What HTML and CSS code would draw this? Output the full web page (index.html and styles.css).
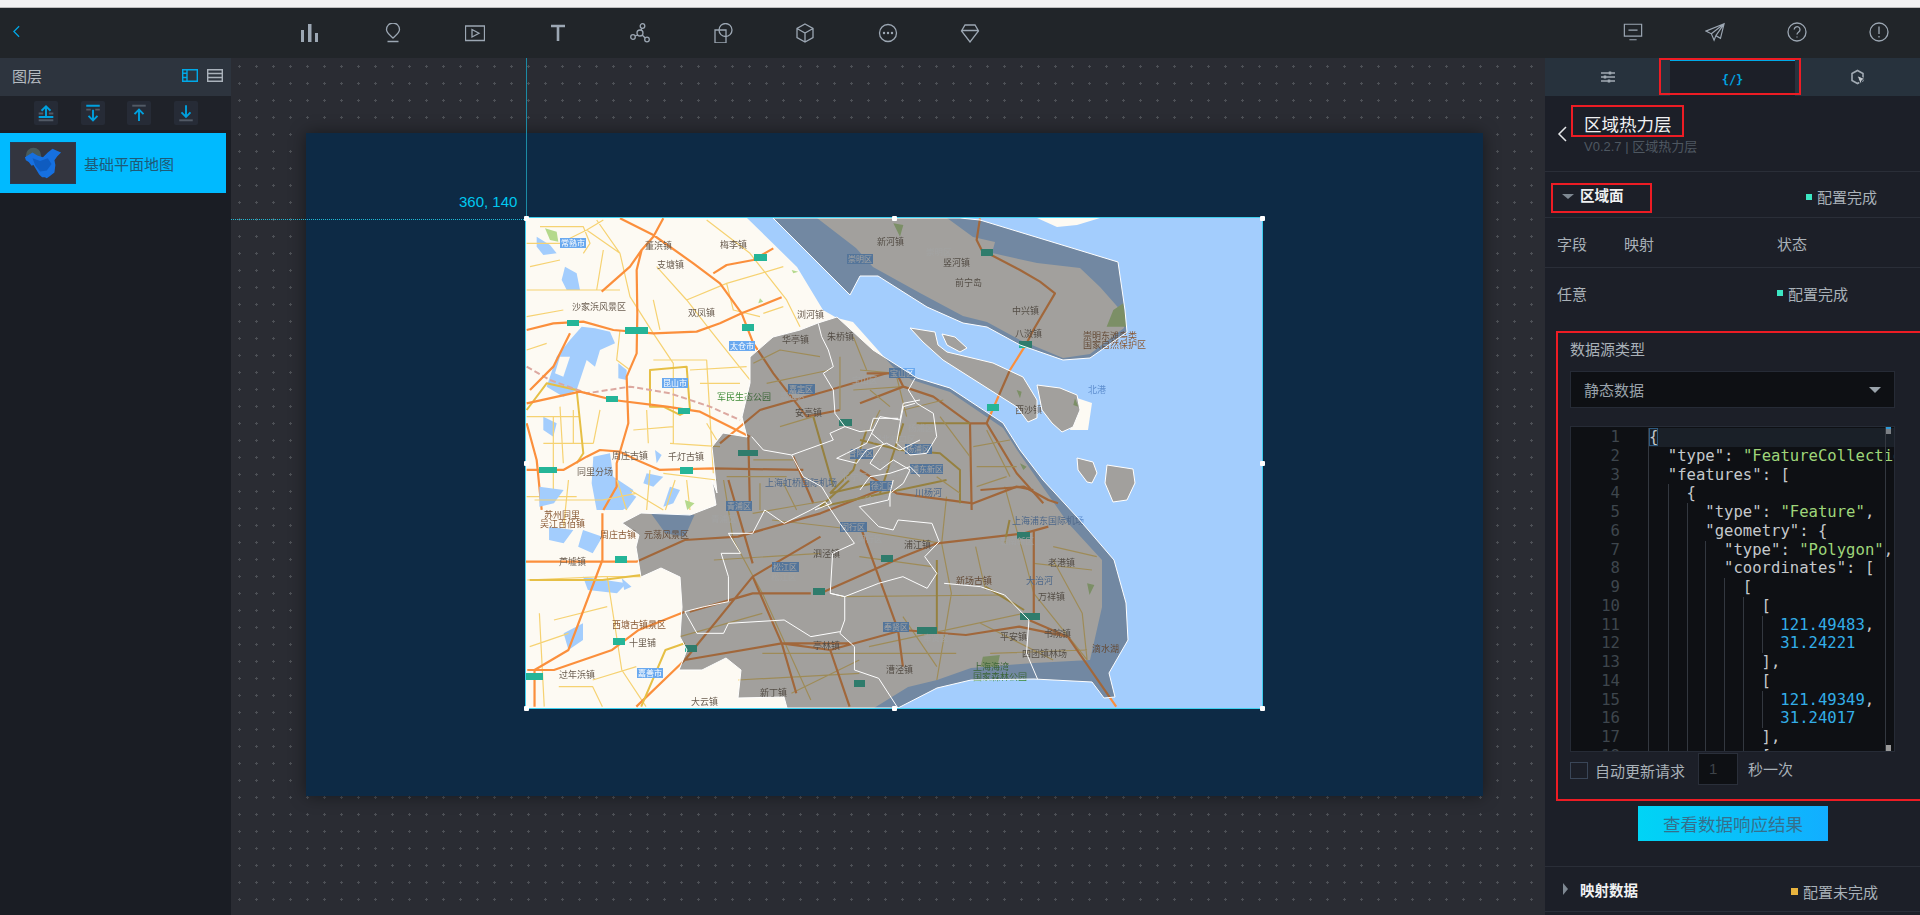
FILE: index.html
```html
<!DOCTYPE html>
<html lang="en">

<head>
  <meta charset="UTF-8" />
  <title>区域热力层</title>
  <link rel="stylesheet" href="styles.css">
</head>

<body>
  <div class="browser-strip"></div>

  <header class="toolbar">
    <svg class="back" viewBox="0 0 8 14"><path d="M7 1 1 7l6 6" /></svg>
    <div class="tools">
      <svg viewBox="0 0 20 20"><path class="solid" d="M1 7h3v12H1zM8 1h3.500v18H8zM15 10h3v9h-3z" /></svg>
      <svg viewBox="0 0 20 20"><path d="M10 15C7 12 3.500 10 3.500 6.500a6.500 6.500 0 0 1 13 0C16.500 10 13 12 10 15ZM4.500 18.500h11" /></svg>
      <svg viewBox="0 0 20 20"><path d="M.5 3h19v14.500H.5zM7 6.500l7 3.800-7 3.700z" /></svg>
      <svg viewBox="0 0 20 20"><path class="thick" d="M3 3h14M10 3v15" /></svg>
      <svg viewBox="0 0 20 20"><circle cx="12.500" cy="3" r="2.300" /><circle cx="3" cy="14" r="2.300" /><circle cx="17" cy="16.500" r="2.300" /><circle cx="10" cy="10" r="3" /><path d="M12 5.200 11 7.300M8 12l-3 1M12.200 12l3 3" /></svg>
      <svg viewBox="0 0 20 20"><path d="M2 7h11v13H2z" /><circle cx="12.500" cy="7" r="6.500" /></svg>
      <svg viewBox="0 0 20 20"><path d="M10 1l8 4.500v9L10 19l-8-4.500v-9zM2 5.500l8 4.500 8-4.500M10 10v9" /></svg>
      <svg viewBox="0 0 20 20"><circle cx="10" cy="10" r="8.500" /><path class="dots" d="M6 10h.01M10 10h.01M14 10h.01" /></svg>
      <svg viewBox="0 0 20 20"><path d="M5 2h10l3.500 6L10 19 1.500 8zM2 7.500h16" /></svg>
    </div>
    <div class="actions">
      <svg viewBox="0 0 22 20"><path d="M1.500 1.500h19v13h-19zM6 8h10M7 18.500h8" /></svg>
      <svg viewBox="0 0 22 20"><path d="M21 1 1 9l6 3 3 7 2-5 5 3zM21 1 7 12M21 1l-9 13" /></svg>
      <svg viewBox="0 0 20 20"><circle cx="10" cy="10" r="9" /><path d="M7.200 7.500a2.900 2.900 0 1 1 4.500 2.500c-1.200.8-1.700 1.400-1.700 2.500M10 14.500v1" /></svg>
      <svg viewBox="0 0 20 20"><circle cx="10" cy="10" r="9" /><path d="M10 4.500v7.500M10 14v1.500" /></svg>
    </div>
  </header>

  <div class="workspace">
    <aside class="layers">
      <div class="layers-head">
        <span>图层</span>
        <div class="view-switch">
          <svg class="on" viewBox="0 0 16 13"><path d="M.7.700h14.600v11.600H.7zM5 .700v11.600M1 4.300h4M1 8.500h4" /></svg>
          <svg viewBox="0 0 16 13"><path d="M.7.700h14.600v11.600H.7zM1 4.500h14M1 8.500h14" /></svg>
        </div>
      </div>
      <div class="layer-actions">
        <button><svg viewBox="0 0 16 16"><path d="M8 11V2M4 6l4-4 4 4M1.500 11.500h13" /><path class="dim" d="M1.500 8.500h4M10.500 8.500h4M1.500 14.500h13" /></svg></button>
        <button><svg viewBox="0 0 16 16"><path d="M2 1.500h12M8 5v9.500M4 10.500l4 4 4-4" /><path class="dim" d="M2 5h4M10 5h4" /></svg></button>
        <button><svg viewBox="0 0 16 16"><path class="dim" d="M2 1.500h12" /><path d="M8 15V5M4 9l4-4 4 4" /></svg></button>
        <button><svg viewBox="0 0 16 16"><path d="M8 1v10M4 7.500l4 4 4-4" /><path class="dim" d="M2 14.500h12" /></svg></button>
      </div>
      <div class="layer-item">
        <div class="thumb">
          <svg viewBox="0 0 66 42">
            <circle class="thumb-halo" cx="23" cy="13" r="8" />
            <path class="thumb-cn" d="M14 15l8-5 5 3 6 2 5-5 5-4 4 2 5 2-4 4-3 4 1 5-1 8-5 4-3 2-2-1-3 0-3-3-3-5-3-5-2 1-3-4-3-2z" />
            <path class="thumb-cn2" d="M22 16l8 3 8-3 4 6-5 7-7 1-5-6z" />
          </svg>
        </div>
        <span>基础平面地图</span>
      </div>
    </aside>

    <main class="canvas">
      <div class="guide-v"></div>
      <div class="guide-h"></div>
      <div class="coords">360, 140</div>
      <div class="screen">
        <div class="map">
          <svg class="map-svg" viewBox="0 0 736 490">
            <defs>
              <polygon id="sh" points="292,105 311,99 347,132 391,160 424,170 477,205 494,232 517,262 551,299 588,342 600,385 602,422 583,455 589,479 578,480 566,464 508,461 445,462 411,470 372,490 261,490 258,479 212,480 215,452 200,440 176,452 153,452 161,432 154,419 156,389 154,359 135,350 115,359 110,329 113,317 96,305 115,295 164,297 190,287 186,262 191,275 186,229 197,215 221,219 216,199 224,165 224,139 247,119 274,112" />
              <polygon id="cm" points="247,0 324,77 334,58 352,58 401,89 437,105 461,109 494,127 537,142 564,140 601,114 599,92 592,44 454,2 434,0" />
              <polygon id="i1" points="384,110 409,114 412,127 421,134 467,145 497,159 511,182 511,200 502,204 491,189 417,142 397,124" />
              <polygon id="i2" points="416,116 429,119 441,130 434,134 421,127" />
              <polygon id="i3" points="511,167 534,170 551,177 554,192 547,209 536,214 526,205 516,192" />
              <polygon id="i4" points="551,240 567,244 571,255 566,265 561,264 552,252" />
              <polygon id="i5" points="581,247 607,251 609,265 601,282 587,284 579,265" />
            </defs>

            <g class="map-art">
              <rect class="water" width="736" height="490" />
              <polygon class="land" points="0,0 221,0 271,49 297,92 311,100 327,104 367,149 386,162 424,174 477,210 491,232 514,265 542,305 576,342 576,389 564,442 508,445 445,450 411,462 382,469 348,490 0,490" />
              <polygon class="land" points="291,0 330,30 347,49 394,75 437,98 461,104 494,122 537,140 564,136 598,110 597,95 574,69 554,50 511,45 466,35 469,24 447,19 421,0" />
              <use class="land" href="#i1" /><use class="land" href="#i2" /><use class="land" href="#i3" />
              <use class="land" href="#i4" /><use class="land" href="#i5" />
              <polygon class="land" points="551,180 566,185 562,212 544,212" />
              <polygon class="land" points="511,0 531,9 551,7 574,0" />

              <!-- west side and north half -->
              <g transform="translate(-6 -8) scale(.3333)">
                <path class="lake" d="M185 350 225 355 270 365 285 400 240 420 225 470 200 450 170 540 130 560 80 530 110 440 150 390Z" />
                <path class="land" d="M120 440 150 440 130 500 105 490Z" />
                <path class="lake" d="M135 170 170 190 180 240 140 240 125 210Z" />
                <path class="lake" d="M50 80 90 105 110 130 70 135 50 110Z" />
                <path class="lake" d="M295 460 320 480 320 510 295 505Z" />
                <path class="lake" d="M70 620 110 640 100 680 70 660Z" />
                <path class="lake" d="M220 740 270 730 280 800 340 840 310 900 230 900 215 820Z" />
                <path class="lake" d="M380 790 430 800 400 830 370 820Z" />
                <path class="lake" d="M450 830 480 840 460 880 430 890Z" />
                <path class="lake" d="M405 720 425 735 410 760Z" />
                <path class="park" d="M75 55 110 65 115 95 90 90Z" />
                <path class="park" d="M720 265 730 275 715 280ZM815 180 835 185 820 190Z" />
                <path class="thin" d="M20 100H120L200 60 250 30M20 240H300M20 320 130 300M200 60 300 130 330 260 400 370 460 460 460 700M410 170 500 270 570 360 650 460 690 510M230 30 300 130M500 270 620 220 790 170M560 30 690 130 800 270 840 350M300 360 290 450 330 480M400 450H560L570 620 580 790M20 620H180M120 590 130 760M240 600 220 700M380 600 385 700M450 700 600 710M20 860H170M430 790 590 810M330 840 430 900M60 50H190L210 100 190 130M30 170 120 150M250 120 230 240M400 270 420 360M620 220 640 300 720 320M730 310 790 290M20 420 80 400M540 520 660 520M510 480 680 470M70 700H220M100 620V860M160 600V700M340 660 460 650M560 640 590 690M390 780 380 900M500 810 510 900" />
                <path class="gold" d="M390 590V480L500 470 510 600 480 615 430 590ZM20 600 80 520 170 540 190 730 170 760" />
                <path class="rail" d="M20 470 90 510 200 550 330 530 450 550 570 590 660 630" />
                <path class="hwy" d="M430 25 400 80 365 120 350 180 352 310 350 430 320 500 325 640 290 760 290 830 250 900M300 25 400 75 520 160 600 220 665 310 700 400 760 490 860 620 960 600M20 360 100 340 190 335 280 360 400 370 530 365 600 340 665 310 785 262M580 190 620 165 700 150 760 115M245 245 330 170 365 120M20 580 180 545 280 570 440 590 540 605 690 680M20 780 130 780 200 740 240 720 300 725 350 750 420 780 580 775 850 780M150 370 100 470 30 540M20 640 50 750 65 900M1100 490 930 540 720 600 600 700M820 740 880 880M685 680 690 900" />
                <path class="gold" d="M880 620 940 830M1040 660 1000 780 930 850M930 850 1060 820" />
                <path class="thin" d="M700 460 780 420 900 440M740 520 930 480M1000 380 1040 480M1020 480 1130 490M960 440 960 600M1130 500 1160 620M780 650 880 620M700 750H820M620 800H800M720 820V900M790 820 830 900M1000 540 1150 530" />
              </g>

              <!-- south half -->
              <g transform="translate(-6 262) scale(.4847 .3333)">
                <path class="lake" d="M270 100 360 105 340 170 300 160Z" />
                <path class="lake" d="M90 460 130 430 130 480 100 510Z" />
                <path class="lake" d="M40 20 90 30 70 70 40 80Z" />
                <path class="lake" d="M130 290 220 310 200 340 140 330Z" />
                <path class="lake" d="M60 140 110 150 90 190 60 180ZM130 150 170 170 150 220 120 200ZM215 30 240 50 220 90 195 70ZM210 295 230 320 215 330Z" />
                <path class="park" d="M340 60 360 70 345 90Z" />
                <path class="thin" d="M30 60H170L240 40M100 0 90 140M200 0 220 90M15 300 170 290 250 290M40 400 50 680M180 290 210 570 260 680M80 620H150L170 680M320 0 300 90M420 0 440 180 500 340 600 660M520 120 700 150 870 190 890 340 860 600M880 50 870 190M1000 20 1040 230 1060 340 1170 540M660 350 1000 345M720 500 1040 400M1100 240 1160 400 1170 540M560 640 700 540M500 520H900M450 600 700 580M330 470 500 400M400 240 620 220M480 100 640 60M700 230 850 260M790 410 860 560M940 200 960 330M1100 200 1190 230M950 430 1100 540M970 520 1170 510M1060 250 1180 270M70 420 180 380M150 600 240 560M20 500 100 460" />
                <path class="hwy" d="M10 245H240L340 180 450 170 620 100 760 20M170 100 170 240 100 510 30 570 30 680M15 570H70L190 510 245 450 340 395M240 680 340 540 540 490 640 510 790 450 920 465 1030 440 1130 470 1230 680M340 540 480 290 620 170M600 340H480L350 395M480 290 540 490 570 640M640 510 680 680M700 130 780 450 790 560M620 340 790 230 860 190 1040 160 1090 140M1060 150V400M950 30 1040 20 1090 60 1110 70M540 490 680 490M430 0 480 250M1050 420 1130 470" />
                <path class="gold" d="M20 300 170 300 250 285M250 680 300 510 340 490M680 0 620 80 880 0M960 320 1040 390M860 240 860 460M1000 190 1010 120" />
                <path class="park" d="M955 530 990 525 985 560 950 560ZM1170 310 1185 315 1175 345Z" />
              </g>

              <!-- bridge road over the estuary and east side -->
              <g transform="translate(334 -8) scale(.3333)">
                <path class="hwy" d="M360 25 350 90 365 120 480 180 540 215 585 250 520 360 500 400 450 480 380 640 330 640 220 560 130 530 0 580M130 530 110 490 20 490M330 640 335 900M380 640 470 790 550 880M0 780 110 850 340 880 470 830 520 840" />
                <path class="gold" d="M170 640H330M0 690 120 720 240 730 300 780 300 880M60 850 130 640" />
                <path class="thin" d="M30 540 90 590M130 600 250 570M240 620 330 740M340 710 450 690M350 770H470M350 830 440 800M380 660 450 800M60 600 30 660M230 800 300 850" />
                <path class="park" d="M100 40 130 45 120 80ZM760 300 790 280 800 350 740 350Z" />
                <path class="park" d="M470 540 485 545 480 565ZM645 565 655 590 640 585ZM480 760 500 770 490 780Z" />
              </g>

              <g class="labels">
                <rect class="tag" x="34" y="20" width="26" height="10" /><text class="tag-t" x="35" y="28">常熟市</text>
                <rect class="tag" x="203" y="123" width="26" height="10" /><text class="tag-t" x="204" y="131">太仓市</text>
                <rect class="tag" x="136" y="160" width="26" height="10" /><text class="tag-t" x="137" y="168">昆山市</text>
                <rect class="tag" x="321" y="36" width="26" height="10" /><text class="tag-t" x="322" y="44">崇明区</text>
                <rect class="tag" x="262" y="166" width="27" height="10" /><text class="tag-t" x="263" y="174">嘉定区</text>
                <rect class="tag" x="363" y="150" width="26" height="10" /><text class="tag-t" x="364" y="158">宝山区</text>
                <rect class="tag" x="200" y="283" width="26" height="10" /><text class="tag-t" x="201" y="291">青浦区</text>
                <rect class="tag" x="246" y="344" width="27" height="10" /><text class="tag-t" x="247" y="352">松江区</text>
                <rect class="tag" x="314" y="304" width="27" height="10" /><text class="tag-t" x="315" y="312">闵行区</text>
                <rect class="tag" x="357" y="404" width="26" height="10" /><text class="tag-t" x="358" y="412">奉贤区</text>
                <rect class="tag" x="384" y="246" width="33" height="10" /><text class="tag-t" x="385" y="254">浦东新区</text>
                <rect class="tag" x="111" y="450" width="26" height="10" /><text class="tag-t" x="112" y="458">嘉善市</text>
                <rect class="tag" x="324" y="231" width="23" height="10" />
                <rect class="tag" x="379" y="226" width="27" height="10" /><text class="tag-t" x="380" y="234">杨浦区</text>
                <rect class="tag" x="344" y="263" width="22" height="10" /><text class="tag-t" x="345" y="271">徐汇区</text>

                <rect class="shield" x="41" y="102" width="12" height="6" /><rect class="shield" x="99" y="109" width="23" height="7" />
                <rect class="shield" x="216" y="106" width="12" height="7" /><rect class="shield" x="228" y="36" width="13" height="7" />
                <rect class="shield" x="80" y="178" width="12" height="6" /><rect class="shield" x="152" y="190" width="12" height="6" />
                <rect class="shield" x="212" y="232" width="20" height="6" /><rect class="shield" x="313" y="201" width="13" height="7" />
                <rect class="shield" x="13" y="249" width="18" height="6" /><rect class="shield" x="154" y="249" width="13" height="7" />
                <rect class="shield" x="455" y="31" width="12" height="7" /><rect class="shield" x="493" y="123" width="13" height="7" />
                <rect class="shield" x="461" y="186" width="12" height="7" /><rect class="shield" x="89" y="338" width="12" height="7" />
                <rect class="shield" x="87" y="420" width="12" height="7" /><rect class="shield" x="159" y="427" width="12" height="7" />
                <rect class="shield" x="0" y="455" width="17" height="7" /><rect class="shield" x="287" y="370" width="12" height="7" />
                <rect class="shield" x="355" y="337" width="12" height="7" /><rect class="shield" x="391" y="409" width="20" height="7" />
                <rect class="shield" x="494" y="395" width="20" height="7" /><rect class="shield" x="491" y="314" width="13" height="7" />
                <rect class="shield" x="328" y="462" width="11" height="7" />

                <text x="46" y="92">沙家浜风景区</text><text x="119" y="31">董浜镇</text><text x="131" y="50">支塘镇</text>
                <text x="194" y="30">梅李镇</text><text x="162" y="98">双凤镇</text><text x="271" y="100">浏河镇</text>
                <text x="256" y="125">华亭镇</text><text x="301" y="122">朱桥镇</text><text x="86" y="241">周庄古镇</text>
                <text x="142" y="242">千灯古镇</text><text x="51" y="257">同里分场</text>
                <text class="green" x="191" y="182">军民生态公园</text><text class="white" x="254" y="181">嘉定区</text><text x="269" y="198">安亭镇</text>
                <text class="white" x="326" y="165">宝山区</text><text x="351" y="27">新河镇</text><text class="white" x="400" y="37">崇明区</text>
                <text x="417" y="48">竖河镇</text><text x="429" y="68">前宁岛</text><text x="486" y="96">中兴镇</text><text x="489" y="119">八滧镇</text>
                <text class="brown" x="557" y="121">崇明东滩鸟类</text><text class="brown" x="557" y="130">国家自然保护区</text>
                <text class="water-t" x="562" y="175">北港</text><text x="489" y="195">西沙镇</text>
                <text class="white" x="382" y="213">杨浦区</text><text class="white" x="347" y="224">闸北虹口区</text>
                <text class="white" x="322" y="238">普陀区</text><text class="white" x="346" y="250">静安区</text><text class="white" x="362" y="258">黄浦区</text>
                <text class="white" x="316" y="262">长宁区</text><text class="white" x="339" y="285">徐汇区</text>
                <text class="water-t" x="389" y="278">川杨河</text><text class="water-t" x="239" y="268">上海虹桥国际机场</text>
                <text class="water-t" x="486" y="306">上海浦东国际机场</text>
                <text class="brown" x="18" y="300">苏州同里</text><text class="brown" x="14" y="309">吴江百佰镇</text><text class="brown" x="74" y="320">周庄古镇</text>
                <text class="brown" x="118" y="320">元荡风景区</text><text class="white" x="185" y="304">青浦区</text>
                <text x="33" y="347">芦墟镇</text><text class="brown" x="86" y="410">西塘古镇景区</text><text x="103" y="428">十里铺</text>
                <text x="33" y="460">过年浜镇</text><text class="white" x="245" y="362">松江区</text><text class="white" x="331" y="324">闵行区</text>
                <text x="378" y="330">浦江镇</text><text x="287" y="339">泗泾镇</text><text class="white" x="474" y="326">惠南新区</text>
                <text class="brown" x="430" y="366">新场古镇</text><text class="water-t" x="500" y="366">大治河</text><text x="512" y="382">万祥镇</text>
                <text x="522" y="348">老港镇</text><text class="brown" x="566" y="434">滴水湖</text><text x="518" y="419">书院镇</text>
                <text x="474" y="422">平安镇</text><text class="white" x="397" y="423">奉贤区</text><text x="287" y="431">亭林镇</text>
                <text x="360" y="455">漕泾镇</text><text x="234" y="478">新丁镇</text><text x="165" y="487">大云镇</text>
                <text class="green" x="447" y="452">上海海湾</text><text class="green" x="447" y="462">国家森林公园</text><text x="496" y="439">四团镇林场</text>
              </g>
            </g>

            <g class="ovl">
              <use href="#sh" /><use href="#cm" /><use href="#i1" /><use href="#i2" /><use href="#i3" /><use href="#i4" /><use href="#i5" />
            </g>

            <g class="district" transform="translate(-6 -8) scale(.3333)">
              <path d="M895 340 905 380 925 420 940 470 910 490 940 540 945 610 975 650 930 670 940 690 815 735 730 720 695 680M815 735 850 800 905 830 935 880 885 900M975 650 1020 665 1060 660 1080 620 1140 630 1150 580 1200 570M1060 660 1040 700 980 730 950 745 1010 760 1040 720 1100 700 1140 720 1200 690M1020 840 1050 800 1110 790 1170 770 1200 800" />
            </g>
            <g class="district" transform="translate(334 -8) scale(.3333)">
              <path d="M165 505 145 540 170 580 220 610 230 680 200 730 150 735 110 700 120 640 130 590 165 580M30 660 40 625 115 625M35 670 70 700 30 760 60 780 100 750 150 780 130 820 90 850 90 890" />
            </g>
            <g class="district" transform="translate(-6 262) scale(.4847 .3333)">
              <path d="M505 90 545 130 600 90 630 65 660 130 690 190 645 220 640 340 670 350 740 310 790 290 840 325 860 280 835 230 865 185 850 130 780 120 770 150 740 140 700 80 760 60 770 0M640 340 670 350 670 420 660 460 690 500 690 570 740 595 780 685M875 310 950 320 1000 345 1050 420 1045 520 1068 598M430 160 455 220 415 220 430 290 430 365 380 380 340 395 365 460 420 460 430 430 545 420 600 470 660 455M430 160 480 160 505 90" />
            </g>
          </svg>
          <i class="handle tl"></i><i class="handle tc"></i><i class="handle tr"></i>
          <i class="handle ml"></i><i class="handle mr"></i>
          <i class="handle bl"></i><i class="handle bc"></i><i class="handle br"></i>
        </div>
      </div>
    </main>

    <aside class="config">
      <div class="tabs">
        <div class="tab">
          <svg viewBox="0 0 16 12"><path d="M1 2h14M1 6h14M1 10h14" /><path class="knob" d="M10 .500v3M5 4.500v3M9 8.500v3" /></svg>
        </div>
        <div class="tab active">{/}</div>
        <div class="tab">
          <svg viewBox="0 0 16 16"><path class="hex" d="M7.500 1.500 13 4.500v7l-5.500 3-5.500-3v-7z" /><path class="arrow" d="M7 6.500l8.500 3.500-3.500 1.300-1.500 4z" /></svg>
        </div>
      </div>

      <div class="comp-head">
        <svg class="comp-back" viewBox="0 0 10 16"><path d="M9 1 2 8l7 7" /></svg>
        <div>
          <div class="comp-title">区域热力层</div>
          <div class="comp-ver">V0.2.7 | 区域热力层</div>
        </div>
      </div>

      <div class="section-row">
        <span class="tri-down"></span>
        <span class="section-name">区域面</span>
        <span class="status status-a"><i class="sq ok"></i>配置完成</span>
      </div>
      <div class="field-row head-row">
        <span class="col-a">字段</span><span class="col-b">映射</span><span class="col-c">状态</span>
      </div>
      <div class="field-row tall-row">
        <span class="col-a">任意</span><span class="col-b"></span>
        <span class="col-c"><i class="sq ok"></i>配置完成</span>
      </div>

      <div class="source">
        <label class="source-label">数据源类型</label>
        <div class="select">静态数据<span class="caret"></span></div>
        <div class="editor">
          <div class="ruler"><i class="mark-blue"></i><i class="mark-top"></i><i class="mark-bottom"></i></div>
          <div class="line current"><span class="num">1</span><code><b class="brace">{</b></code></div>
          <div class="line"><span class="num">2</span><code><i></i>"type": <em>"FeatureCollection"</em>,</code></div>
          <div class="line"><span class="num">3</span><code><i></i>"features": [</code></div>
          <div class="line"><span class="num">4</span><code><i></i><i></i>{</code></div>
          <div class="line"><span class="num">5</span><code><i></i><i></i><i></i>"type": <em>"Feature"</em>,</code></div>
          <div class="line"><span class="num">6</span><code><i></i><i></i><i></i>"geometry": {</code></div>
          <div class="line"><span class="num">7</span><code><i></i><i></i><i></i><i></i>"type": <em>"Polygon"</em>,</code></div>
          <div class="line"><span class="num">8</span><code><i></i><i></i><i></i><i></i>"coordinates": [</code></div>
          <div class="line"><span class="num">9</span><code><i></i><i></i><i></i><i></i><i></i>[</code></div>
          <div class="line"><span class="num">10</span><code><i></i><i></i><i></i><i></i><i></i><i></i>[</code></div>
          <div class="line"><span class="num">11</span><code><i></i><i></i><i></i><i></i><i></i><i></i><i></i><u>121.49483</u>,</code></div>
          <div class="line"><span class="num">12</span><code><i></i><i></i><i></i><i></i><i></i><i></i><i></i><u>31.24221</u></code></div>
          <div class="line"><span class="num">13</span><code><i></i><i></i><i></i><i></i><i></i><i></i>],</code></div>
          <div class="line"><span class="num">14</span><code><i></i><i></i><i></i><i></i><i></i><i></i>[</code></div>
          <div class="line"><span class="num">15</span><code><i></i><i></i><i></i><i></i><i></i><i></i><i></i><u>121.49349</u>,</code></div>
          <div class="line"><span class="num">16</span><code><i></i><i></i><i></i><i></i><i></i><i></i><i></i><u>31.24017</u></code></div>
          <div class="line"><span class="num">17</span><code><i></i><i></i><i></i><i></i><i></i><i></i>],</code></div>
          <div class="line"><span class="num">18</span><code><i></i><i></i><i></i><i></i><i></i><i></i>[</code></div>
        </div>
        <div class="refresh">
          <span class="check"></span>
          <span class="refresh-label">自动更新请求</span>
          <span class="num-input">1</span>
          <span class="refresh-unit">秒一次</span>
        </div>
      </div>

      <div class="btn-row"><button class="result-btn">查看数据响应结果</button></div>

      <div class="section-row map-row">
        <span class="tri-right"></span>
        <span class="section-name">映射数据</span>
        <span class="status status-b"><i class="sq warn"></i>配置未完成</span>
      </div>
    </aside>
  </div>

  <!-- red annotation boxes drawn on the screenshot -->
  <div class="note note-tab"></div>
  <div class="note note-title"></div>
  <div class="note note-section"></div>
  <div class="note note-source"></div>
</body>

</html>
```

FILE: styles.css
```css
* {
  box-sizing: border-box;
}

html,
body {
  height: 100%;
}

body {
  margin: 0;
  position: relative;
  overflow: hidden;
  display: flex;
  flex-direction: column;
  font-family: "Liberation Sans", "Noto Sans CJK SC", sans-serif;
  font-size: 15px;
  color: #a9b1b8;
  background-color: #1a1d24;
}

svg {
  display: block;
}

.browser-strip {
  height: 8px;
  flex: none;
  background-color: #f2f2f2;
  border-bottom: 1px solid #bdbdbd;
}

/* top toolbar */
.toolbar {
  height: 50px;
  flex: none;
  display: flex;
  align-items: center;
  padding-right: 31px;
  background-color: #212529;
}

.toolbar svg path,
.toolbar svg circle {
  fill: none;
  stroke: #9ca7b3;
  stroke-width: 1.3;
}

.toolbar .back {
  width: 7px;
  height: 13px;
  margin: -3px 0 0 13px;
}

.toolbar .back path {
  stroke: #00a9e8;
  stroke-width: 1.4;
}

.toolbar svg path.solid {
  fill: #9ca7b3;
  stroke: none;
}

.toolbar svg path.thick {
  stroke-width: 2.6;
}

.toolbar svg path.dots {
  stroke-width: 2.4;
  stroke-linecap: round;
}

.tools {
  display: flex;
  gap: 62.500px;
  margin: -1px 0 0 280px;
}

.tools svg {
  width: 20px;
  height: 20px;
}

.actions {
  display: flex;
  gap: 62px;
  margin: -3px 0 0 auto;
}

.actions svg {
  width: 20px;
  height: 20px;
}

.workspace {
  flex: 1;
  min-height: 0;
  display: flex;
}

/* layer panel */
.layers {
  width: 231px;
  flex: none;
  background-color: #1a1d24;
}

.layers-head {
  height: 38px;
  display: flex;
  align-items: center;
  justify-content: space-between;
  padding: 0 8px 3px 12px;
  background-color: #2d343e;
  color: #b4bac0;
}

.view-switch {
  display: flex;
  gap: 9px;
}

.view-switch svg {
  width: 16px;
  height: 13px;
}

.view-switch path {
  fill: none;
  stroke: #aab2bb;
  stroke-width: 1.400;
}

.view-switch .on path {
  stroke: #00a9e8;
}

.layer-actions {
  height: 34px;
  display: flex;
  align-items: center;
  gap: 22.500px;
  padding-left: 34px;
  background-color: #1f2229;
}

.layer-actions button {
  width: 24px;
  height: 24px;
  padding: 3px;
  border: none;
  border-radius: 2px;
  background-color: #262b36;
}

.layer-actions path {
  fill: none;
  stroke: #00a0de;
  stroke-width: 1.700;
}

.layer-actions path.dim {
  stroke: #525a66;
}

.layer-item {
  width: 226px;
  height: 60px;
  margin-top: 3px;
  display: flex;
  align-items: center;
  gap: 8px;
  padding-left: 10px;
  background-color: #00baff;
  color: #1e5a78;
}

.thumb {
  width: 66px;
  height: 42px;
  background-color: #33353f;
  border: 1px solid #2c3a52;
}

.thumb svg {
  width: 100%;
  height: 100%;
}

.thumb-halo {
  fill: #55736e;
  opacity: 0.6;
}

.thumb-cn {
  fill: #1670e0;
}

.thumb-cn2 {
  fill: #0f5cc0;
}

/* canvas */
.canvas {
  flex: 1;
  position: relative;
  padding: 75px 62px 0 75px;
  overflow: hidden;
  background-color: #2a2c33;
  background-image: radial-gradient(circle, #4d5056 1px, transparent 1.300px);
  background-size: 17px 17px;
  background-position: 0 0;
}

.screen {
  width: 1177px;
  height: 663px;
  padding: 85px 0 0 220px;
  background-color: #0d2a45;
  box-shadow: 0 0 16px rgba(0, 0, 0, 0.45);
}

.map {
  width: 736px;
  height: 490px;
  position: relative;
  outline: 1px solid #3fd0f0;
}

.map-svg {
  width: 736px;
  height: 490px;
}

.map-art {
  filter: blur(0.45px);
}

.water {
  fill: #a3cdfd;
}

.land {
  fill: #fdfaf3;
}

.lake {
  fill: #a3cdfd;
}

.park {
  fill: #b5d98c;
}

.thin,
.gold,
.hwy,
.rail {
  fill: none;
  stroke-linejoin: round;
  vector-effect: non-scaling-stroke;
}

.thin {
  stroke: #f6d272;
  stroke-width: 1.200;
}

.gold {
  stroke: #e6bf45;
  stroke-width: 2;
}

.hwy {
  stroke: #fb8f3c;
  stroke-width: 2.200;
}

.rail {
  stroke: #dca8a0;
  stroke-width: 2;
  stroke-dasharray: 6 3;
}

.labels text {
  font-size: 9px;
  fill: #6a5d50;
}

.labels .brown {
  fill: #8a5a35;
}

.labels .green {
  fill: #3c8a35;
}

.labels .water-t {
  fill: #5f8fcf;
}

.labels .white {
  fill: #ffffff;
  font-size: 8.500px;
}

.labels .tag-t {
  fill: #ffffff;
  font-size: 8px;
}

.tag {
  fill: #6aa9ef;
}

.shield {
  fill: #25b598;
}

.ovl use {
  fill: rgba(60, 60, 60, 0.47);
  stroke: #ffffff;
  stroke-width: 1;
}

.district path {
  fill: none;
  stroke: #ffffff;
  stroke-width: 1;
  vector-effect: non-scaling-stroke;
}

.guide-v {
  position: absolute;
  left: 295px;
  top: 0;
  width: 1px;
  height: 160px;
  background-color: #1b8aa5;
}

.guide-h {
  position: absolute;
  left: 0;
  top: 161px;
  width: 295px;
  border-top: 1px dotted #20bcd8;
}

.coords {
  position: absolute;
  left: 228px;
  top: 135px;
  color: #00c8f0;
  z-index: 1;
}

.handle {
  position: absolute;
  width: 5px;
  height: 5px;
  margin: -2px 0 0 -2px;
  background-color: #ffffff;
  border-radius: 1px;
}

.tl, .ml, .bl { left: 0; }
.tc, .bc { left: 50%; }
.tr, .mr, .br { left: 100%; }
.tl, .tc, .tr { top: 0; }
.ml, .mr { top: 50%; }
.bl, .bc, .br { top: 100%; }

/* config panel */
.config {
  width: 375px;
  flex: none;
  background-color: #1c1f28;
}

.tabs {
  height: 38px;
  display: grid;
  grid-template-columns: 125px 125px 125px;
  background-color: #27323d;
}

.tab {
  display: flex;
  align-items: center;
  justify-content: center;
}

.tab svg {
  width: 16px;
  height: 16px;
}

.tab path {
  fill: none;
  stroke: #a2abb4;
  stroke-width: 1.300;
}

.tab path.knob {
  stroke-width: 2.500;
}

.tab path.hex {
  stroke-width: 1.600;
}

.tab path.arrow {
  fill: #c2c8ce;
  stroke: #27323d;
  stroke-width: 1;
}

.tab.active {
  margin-top: 2px;
  padding-top: 2px;
  background-color: #1c1f28;
  border-top: 1px solid #00a9e8;
  color: #00a3e0;
  font-family: "DejaVu Sans Mono", monospace;
  font-size: 12px;
  font-weight: bold;
}

.comp-head {
  height: 76px;
  display: flex;
  gap: 17px;
  padding: 18px 0 0 12px;
  border-bottom: 1px solid #2a2e38;
}

.comp-back {
  width: 10px;
  height: 16px;
  margin-top: 12px;
  flex: none;
}

.comp-back path {
  fill: none;
  stroke: #e6e8ea;
  stroke-width: 1.500;
}

.comp-title {
  font-size: 17.500px;
  line-height: 22px;
  color: #f0f1f2;
}

.comp-ver {
  font-size: 13px;
  line-height: 18px;
  margin-top: 2px;
  color: #4e5761;
}

.section-row {
  height: 46px;
  position: relative;
  display: flex;
  align-items: center;
  border-bottom: 1px solid #2a2e38;
}

.section-name {
  color: #f0f1f2;
  font-weight: bold;
  font-size: 14.500px;
}

.tri-down {
  width: 0;
  height: 0;
  margin: 3px 6px 0 17px;
  border-left: 6px solid transparent;
  border-right: 6px solid transparent;
  border-top: 5px solid #7e8892;
}

.tri-right {
  width: 0;
  height: 0;
  margin: 0 12px 0 18px;
  border-top: 6px solid transparent;
  border-bottom: 6px solid transparent;
  border-left: 5px solid #7e8892;
}

.status {
  position: absolute;
  display: flex;
  align-items: center;
  top: 14px;
  white-space: nowrap;
}

.status-a {
  left: 261px;
}

.status-b {
  left: 246px;
}

.sq {
  width: 6px;
  height: 6px;
  margin-right: 5px;
  display: inline-block;
}

.ok {
  background-color: #3ce6c3;
}

.warn {
  width: 7px;
  height: 7px;
  background-color: #e8b33e;
}

.field-row {
  display: flex;
  align-items: center;
  padding-left: 12px;
  border-bottom: 1px solid #2a2e38;
}

.head-row {
  height: 50px;
  padding-top: 2px;
}

.tall-row {
  height: 50px;
  border-bottom: none;
}

.col-a {
  width: 67px;
}

.col-b {
  width: 153px;
}

.col-c {
  display: flex;
  align-items: center;
}

.source {
  height: 468px;
  margin: 14px 0 0 25px;
  padding-top: 1px;
}

.source-label {
  display: block;
  line-height: 20px;
  margin-top: 7px;
}

.select {
  width: 325px;
  height: 37px;
  position: relative;
  margin-top: 11px;
  display: flex;
  align-items: center;
  padding-left: 13px;
  background-color: #0e1014;
  border: 1px solid #262b36;
  color: #9aa3ab;
}

.caret {
  position: absolute;
  right: 13px;
  top: 15px;
  border-left: 6px solid transparent;
  border-right: 6px solid transparent;
  border-top: 6px solid #9aa3ab;
}

.editor {
  width: 325px;
  height: 326px;
  position: relative;
  margin-top: 18px;
  padding-top: 1px;
  overflow: hidden;
  background-color: #0e1014;
  border: 1px solid #262b36;
  font-family: "DejaVu Sans Mono", monospace;
  font-size: 15.600px;
  color: #c5c9cc;
}

.line {
  height: 18.750px;
  line-height: 18.750px;
  display: flex;
  white-space: pre;
}

.num {
  width: 77px;
  flex: none;
  padding-right: 28px;
  text-align: right;
  color: #3e464d;
}

.line code {
  flex: 1;
  font: inherit;
  border-left: 1px solid #333840;
}

.line code i {
  display: inline-block;
  width: 2ch;
  height: 18.750px;
  vertical-align: top;
}

.line code i + i {
  border-left: 1px solid #333840;
}

.line em {
  font-style: normal;
  color: #9fd67a;
}

.line u {
  text-decoration: none;
  color: #33aee8;
}

.current code {
  background-color: #1a2028;
}

.brace {
  font-weight: normal;
  outline: 1px solid #2e5a80;
  outline-offset: -1px;
}

.ruler {
  position: absolute;
  right: 0;
  top: 0;
  bottom: 0;
  width: 9px;
  z-index: 1;
  border-left: 1px solid #333840;
}

.ruler i {
  position: absolute;
  left: 0;
  width: 5px;
}

.mark-blue {
  top: 0;
  height: 2px;
  background-color: #2d9ad8;
}

.mark-top {
  top: 2px;
  height: 5px;
  background-color: #7c8085;
}

.mark-bottom {
  bottom: 0;
  height: 6px;
  background-color: #9a9a9a;
}

.refresh {
  display: flex;
  align-items: center;
  height: 32px;
  margin-top: 1px;
}

.check {
  width: 18px;
  height: 17px;
  margin-top: 2px;
  border: 1px solid #3a4658;
}

.refresh-label {
  margin: 2px 13px 0 7px;
}

.num-input {
  width: 40px;
  height: 32px;
  padding: 6px 0 0 10px;
  background-color: #0e1014;
  border: 1px solid #2a2f3a;
  color: #3e4349;
}

.refresh-unit {
  margin: -2px 0 0 10px;
}

.btn-row {
  display: flex;
  height: 66px;
  padding: 6px 0 0 93px;
}

.result-btn {
  width: 190px;
  height: 35px;
  padding: 0;
  border: none;
  background: linear-gradient(90deg, #00d4f5, #12aeff);
  color: #35708d;
  font-family: inherit;
  font-size: 17.500px;
}

.map-row {
  border-top: 1px solid #2a2e38;
}

/* red annotation boxes */
.note {
  position: absolute;
  border: 2px solid #ed1c24;
  pointer-events: none;
}

.note-tab {
  left: 1659px;
  top: 58px;
  width: 142px;
  height: 37px;
}

.note-title {
  left: 1571px;
  top: 105px;
  width: 113px;
  height: 32px;
}

.note-section {
  left: 1551px;
  top: 183px;
  width: 101px;
  height: 30px;
}

.note-source {
  left: 1556px;
  top: 331px;
  width: 370px;
  height: 470px;
}
```
